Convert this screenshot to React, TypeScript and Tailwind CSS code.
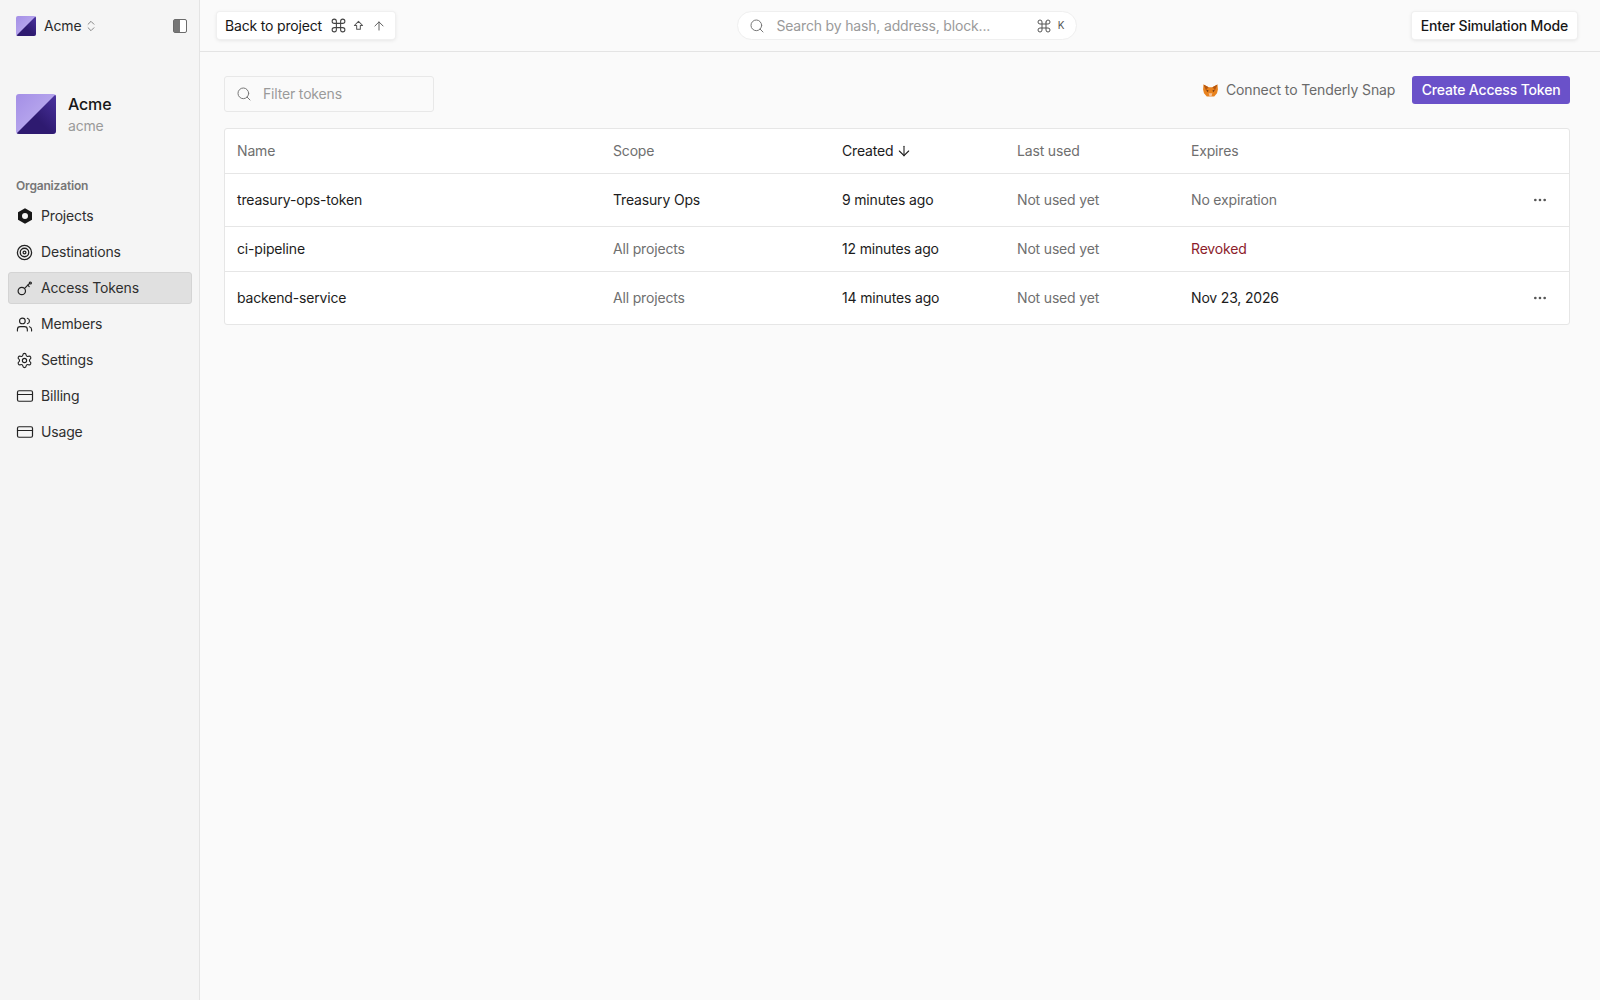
import React from "react";
import { ArrowDown, ArrowUp, ChevronsUpDown, Command, CreditCard, Ellipsis, Search, Settings, Target, Users } from "lucide-react";

// Sidebar entries, "Access Tokens" is the selected one
const navItems = [
  { label: "Projects", icon: "hex" },
  { label: "Destinations", icon: "target" },
  { label: "Access Tokens", icon: "key", active: true },
  { label: "Members", icon: "users" },
  { label: "Settings", icon: "settings" },
  { label: "Billing", icon: "card" },
  { label: "Usage", icon: "card" },
];

const tokens = [
  { name: "treasury-ops-token", scope: "Treasury Ops", scopeDark: true, created: "9 minutes ago", expires: "No expiration", expiresClass: "text-[#6f6f6f]", menu: true, rowClass: "h-[53px]" },
  { name: "ci-pipeline", scope: "All projects", scopeDark: false, created: "12 minutes ago", expires: "Revoked", expiresClass: "text-[#8c1d2b]", menu: false, rowClass: "h-[45px]" },
  { name: "backend-service", scope: "All projects", scopeDark: false, created: "14 minutes ago", expires: "Nov 23, 2026", expiresClass: "text-[#1c1c1c]", menu: true, rowClass: "h-[52px]" },
];

function Logo({ className }: { className: string }) {
  return (
    <div className={`${className} overflow-hidden bg-gradient-to-br from-[#a48fe6] to-[#c4b6f2] relative`}>
      <svg viewBox="0 0 40 40" className="absolute inset-0 w-full h-full">
        <defs>
          <linearGradient id="logoDark" x1="0" y1="1" x2="1" y2="0">
            <stop offset="0.45" stopColor="#2e1a70" />
            <stop offset="1" stopColor="#4b33a0" />
          </linearGradient>
        </defs>
        <path d="M0 40 L40 0 L40 40 Z" fill="url(#logoDark)" />
      </svg>
    </div>
  );
}

function NavIcon({ name }: { name: string }) {
  if (name === "hex") {
    return (
      <svg viewBox="0 0 16 16" className="w-4 h-4 text-[#171717]">
        <path fillRule="evenodd" fill="currentColor" d="M8 .3l7 4v7.400l-7 4-7-4V4.300l7-4zM8 5a3 3 0 100 6 3 3 0 000-6z" />
      </svg>
    );
  }
  if (name === "target") return <Target className="w-[17px] h-[17px] -ml-px text-[#222]" strokeWidth={1.8} />;
  if (name === "key") {
    return (
      <svg viewBox="0 0 16 16" className="w-4 h-4 text-[#222]" fill="none" stroke="currentColor" strokeWidth="1.2" strokeLinecap="round">
        <circle cx="4.800" cy="11" r="3.700" />
        <path d="M7.600 8.400L12.800 3.200" />
        <circle cx="13.400" cy="3" r="1" />
        <path d="M10.800 5.200l1.400 1.400" />
      </svg>
    );
  }
  if (name === "users") return <Users className="w-[17px] h-[17px] -ml-px text-[#222]" strokeWidth={1.6} />;
  if (name === "settings") return <Settings className="w-[17px] h-[17px] -ml-px text-[#222]" strokeWidth={1.6} />;
  return <CreditCard className="w-[18px] h-[18px] -mx-px text-[#222]" strokeWidth={1.6} />;
}

function Fox() {
  return (
    <svg viewBox="0 0 16 14" className="w-[15px] h-[13px]">
      <path fill="#e8821e" d="M.5.5l5.500 3h4l5.500-3 .5 5.500-1 4-3 3.500H4l-3-3.500-1-4z" />
      <path fill="#763d16" d="M3 6l3 1-1 2zM13 6l-3 1 1 2z" />
      <path fill="#f6c39a" d="M6 10h4l-1 3.500H7z" />
      <path fill="#b5560f" d="M.5.5l5.500 3-3 3zM15.500.5l-5.500 3 3 3z" />
    </svg>
  );
}

const btn = "h-[27px] flex items-center bg-white rounded-[3px] shadow-[0_0_0_1px_#f0f0f0,0_1px_4px_rgba(0,0,0,0.12)] text-sm text-[#171717]";

export default function App() {
  return (
    <div className="flex h-[1000px] w-[1600px] overflow-hidden bg-[#fafafa] font-['Inter',sans-serif] text-sm tracking-[-0.17px] text-[#1c1c1c]">
      {/* Sidebar */}
      <aside className="w-[200px] shrink-0 bg-[#f5f5f5] border-r border-[#e4e4e4] flex flex-col">
        <div className="h-[52px] flex items-center pl-4 pr-3">
          <Logo className="w-5 h-5 rounded-[2px]" />
          <span className="ml-2 text-[#2a2a2a]">Acme</span>
          <ChevronsUpDown className="w-[14px] h-[14px] ml-[3px] text-[#777]" strokeWidth={1.5} />
          <div className="ml-auto w-[14px] h-[14px] rounded-[2px] border border-[#6b6b6b] bg-white flex">
            <div className="w-[6px] h-full bg-[#777]" />
          </div>
        </div>

        <div className="flex items-start gap-3 px-4 mt-[42px]">
          <Logo className="w-10 h-10 rounded-[3px]" />
          <div className="flex flex-col">
            <span className="text-base leading-5 font-medium text-[#171717]">Acme</span>
            <span className="mt-[2px] text-sm leading-5 text-[#9a9a9a]">acme</span>
          </div>
        </div>

        <div className="mt-[41px] px-4 text-xs leading-[18px] font-semibold text-[#777]">Organization</div>
        <nav className="mt-[5px] pl-2 pr-[7px] flex flex-col gap-1">
          {navItems.map((item) => (
            <div
              key={item.label}
              className={`h-8 flex items-center gap-2 rounded-[3px] text-[#2f2f2f] ${item.active ? "px-[8px] bg-[#e0e0e0] border border-[#d4d4d4]" : "px-[9px]"}`}
            >
              <NavIcon name={item.icon} />
              <span>{item.label}</span>
            </div>
          ))}
        </nav>
      </aside>

      <div className="flex-1 flex flex-col min-w-0">
        {/* Top bar */}
        <header className="h-[52px] shrink-0 border-b border-[#e4e4e4] flex items-center justify-between pl-[17px] pr-[23px]">
          <div className={`${btn} pl-[8px] pr-[9px]`}>
            <span>Back to project</span>
            <Command className="w-[17px] h-[17px] ml-[8px] text-[#444]" strokeWidth={1.5} />
            <svg viewBox="0 0 12 12" className="w-[11px] h-[11px] ml-[6px] text-[#555]" fill="none" stroke="currentColor" strokeWidth="1.1">
              <path d="M6 1.500L10.500 6H8v4H4V6H1.500z" strokeLinejoin="round" />
            </svg>
            <ArrowUp className="w-[14px] h-[14px] ml-[8px] text-[#555]" strokeWidth={1.6} />
          </div>

          <div className="w-[340px] h-[29px] ml-[8px] rounded-full bg-white border border-[#efefef] flex items-center pl-[11px] pr-[12px]">
            <Search className="w-4 h-4 text-[#777]" strokeWidth={1.5} />
            <span className="ml-[11px] text-[#9a9a9a]">Search by hash, address, block...</span>
            <Command className="w-[16px] h-[16px] ml-auto text-[#555]" strokeWidth={1.5} />
            <span className="ml-[6px] text-[10px] text-[#555]">K</span>
          </div>

          <div className={`${btn} px-[9px] font-medium`}>Enter Simulation Mode</div>
        </header>

        {/* Content */}
        <main className="pl-6 pr-[30px] pt-6 flex-1">
          <div className="flex items-start justify-between">
            <div className="w-[210px] h-9 rounded-[3px] bg-[#fafafa] border border-[#e8e8e8] flex items-center pl-[11px]">
              <Search className="w-4 h-4 text-[#777]" strokeWidth={1.5} />
              <span className="ml-[11px] text-[#9a9a9a]">Filter tokens</span>
            </div>
            <div className="flex items-center">
              <Fox />
              <span className="ml-[8px] text-[#6a6a6a] tracking-[-0.12px]">Connect to Tenderly Snap</span>
              <div className="ml-[17px] h-7 px-[9.5px] flex items-center rounded-[3px] bg-[#6a51c9] text-white font-medium">Create Access Token</div>
            </div>
          </div>

          <div className="mt-4 bg-white border border-[#e6e6e6] rounded-[3px]">
            <div className="grid grid-cols-[376px_229px_175px_174px_1fr] h-[45px] items-center text-[#6f6f6f] border-b border-[#e6e6e6]">
              <div className="pl-3">Name</div>
              <div className="pl-3">Scope</div>
              <div className="pl-3 flex items-center gap-[3px] text-[#1c1c1c]">
                Created <ArrowDown className="w-4 h-4" strokeWidth={1.6} />
              </div>
              <div className="pl-3">Last used</div>
              <div className="pl-3">Expires</div>
            </div>
            {tokens.map((t, i) => (
              <div
                key={t.name}
                className={`grid grid-cols-[376px_229px_175px_174px_1fr] items-center ${t.rowClass} ${i < tokens.length - 1 ? "border-b border-[#e6e6e6]" : ""}`}
              >
                <div className="pl-3 text-[#1c1c1c]">{t.name}</div>
                <div className={`pl-3 ${t.scopeDark ? "text-[#1c1c1c]" : "text-[#6f6f6f]"}`}>{t.scope}</div>
                <div className="pl-3 text-[#1c1c1c]">{t.created}</div>
                <div className="pl-3 text-[#6f6f6f]">Not used yet</div>
                <div className={`pl-3 flex items-center justify-between pr-[21px] ${t.expiresClass}`}>
                  <span>{t.expires}</span>
                  {t.menu && <Ellipsis className="w-4 h-4 text-[#555]" />}
                </div>
              </div>
            ))}
          </div>
        </main>
      </div>
    </div>
  );
}
